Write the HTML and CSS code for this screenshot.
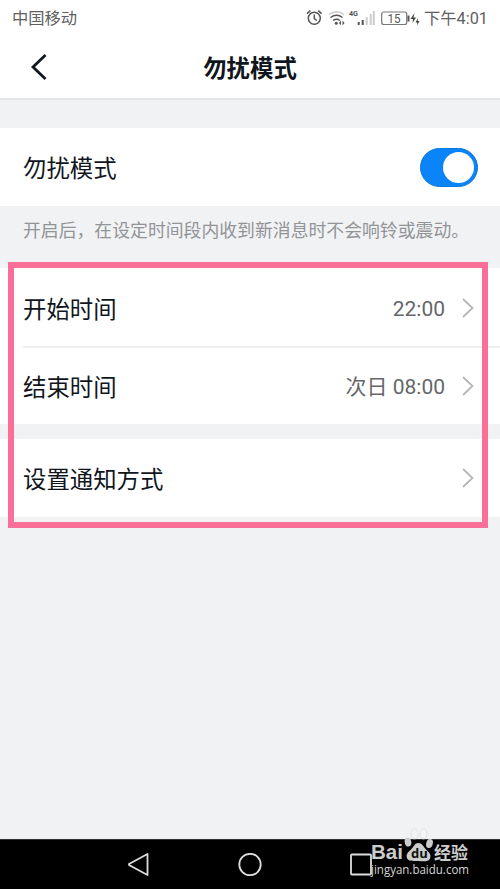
FILE: index.html
```
<!DOCTYPE html>
<html lang="zh-CN">
<head>
<meta charset="utf-8">
<title>勿扰模式</title>
<link rel="stylesheet" href="styles.css">
</head>
<body>
<div class="screen">
  <header class="top">
    <div class="status">
      <span class="carrier">中国移动</span>
      <svg class="status-icons" width="118" height="24" viewBox="0 0 118 24" fill="none" stroke="#555" stroke-width="1.5">
        <circle cx="8.3" cy="12.3" r="6"/>
        <path d="M8.3 8.5v4.2l2.6 1.8M1 7.6l3.4-3M12.2 4.6l3.4 3"/>
        <path stroke="#ccc" d="M23 8.5q7.500-5.500 15 0"/>
        <path d="M24.500 11.500q6-4.500 12 0M27 14.500q3.500-2.500 7 0"/>
        <circle cx="30.300" cy="17.300" r="1.500" fill="#555" stroke="none"/>
        <path fill="#555" stroke="none" d="M33 17l2-2.500v5zM38.500 17l-2-2.500v5z"/>
        <text class="net" x="43" y="9.500" textLength="9" lengthAdjust="spacingAndGlyphs">4G</text>
        <path stroke-width="2" d="M52.700 16v3M56.700 14v5"/>
        <path stroke="#ccc" stroke-width="2" d="M60.700 11v8M64.700 8v11M67.800 5v14"/>
        <rect x="75.700" y="6" width="25" height="12.500" rx="2" stroke="#777" stroke-width="1.200"/>
        <text class="charge" x="81.500" y="16.800" textLength="13" lengthAdjust="spacingAndGlyphs">15</text>
        <path stroke-width="2" d="M102.500 9.500v6"/>
        <path fill="#444" stroke="none" d="M108.500 7l-4 6h2.500l-.5 4 3.500-5.500h-2.500zM112 12l-2.500 4.500h1.800l-.3 3 2.500-4.500h-1.800z"/>
      </svg>
      <span class="clock">下午4:01</span>
    </div>
    <div class="titlebar">
      <svg class="back" width="18" height="28" viewBox="0 0 18 28" fill="none" stroke="#111820" stroke-width="2.800"><path d="M15.500 2L3 14 15.500 26"/></svg>
      <h1>勿扰模式</h1>
    </div>
  </header>
  <main>
    <section class="row toggle-row"><span class="label">勿扰模式</span><span class="switch"><i class="knob"></i></span></section>
    <p class="note">开启后，在设定时间段内收到新消息时不会响铃或震动。</p>
    <section class="group">
      <div class="row start-row"><span class="label">开始时间</span><span class="value">22:00</span><svg class="chevron" width="12" height="20" viewBox="0 0 12 20"><path d="M1 1l9.500 9L1 19"/></svg></div>
      <div class="divider"></div>
      <div class="row end-row"><span class="label">结束时间</span><span class="value">次日 08:00</span><svg class="chevron" width="12" height="20" viewBox="0 0 12 20"><path d="M1 1l9.500 9L1 19"/></svg></div>
    </section>
    <section class="row notify-row"><span class="label">设置通知方式</span><svg class="chevron" width="12" height="20" viewBox="0 0 12 20"><path d="M1 1l9.500 9L1 19"/></svg></section>
  </main>
  <nav class="navbar">
    <svg width="24" height="24" viewBox="0 0 24 24"><path d="M20.500 1v21L2 12v-1z"/></svg>
    <svg width="24" height="24" viewBox="0 0 24 24"><circle cx="12" cy="11.500" r="10.700"/></svg>
    <svg width="24" height="24" viewBox="0 0 24 24"><rect x="2" y="1.500" width="20" height="20" rx="1"/></svg>
  </nav>
  <div class="highlight"></div>
  <svg class="watermark" width="110" height="60" viewBox="0 0 110 60">
    <text class="brand" x="0" y="31" textLength="32" lengthAdjust="spacingAndGlyphs">Bai</text>
    <g fill="#ccc">
      <ellipse cx="37" cy="14" rx="3.300" ry="4.600" transform="rotate(-12 37 14)"/>
      <ellipse class="toe" cx="43.500" cy="6" rx="3.500" ry="5"/>
      <ellipse class="toe" cx="52.500" cy="6" rx="3.500" ry="5"/>
      <ellipse cx="58.500" cy="15.500" rx="3.300" ry="4.600" transform="rotate(15 58.500 15.500)"/>
      <path d="M47.500 15c4 0 5 4 8 7 3 2.500 5 5 3.500 8.500C57.500 34 52.500 33.500 47.500 33s-10 1-11.500-3c-1.300-3.500 1-6 4-8.500C43 18.500 43.500 15 47.500 15z"/>
    </g>
    <text class="paw-text" x="40" y="30">du</text>
    <text class="brand-cn" x="63" y="31">经验</text>
    <text class="site" x="0" y="45.500" textLength="98" lengthAdjust="spacingAndGlyphs">jingyan.baidu.com</text>
  </svg>
</div>
</body>
</html>
```
FILE: styles.css
```
* { box-sizing: border-box; }
body, h1, p { margin: 0; }
body { font-family: Roboto, "Noto Sans CJK SC", sans-serif; color: #11161d; }
svg { display: block; flex: none; }
.screen { position: relative; width: 500px; height: 889px; overflow: hidden; display: flex; flex-direction: column; background: #f1f2f4; }
.top { height: 100px; background: #fff; border-bottom: 2px solid #e5e6e8; }
.status { height: 36px; display: flex; align-items: center; padding: 1px 12px 0; color: #606060; font-size: 16.3px; line-height: 24px; }
.status-icons { margin: 0 0 2px auto; }
.clock { font-size: 16.3px; }
.net { font: bold 8px Roboto, sans-serif; fill: #555; stroke: none; }
.charge { font: 12.5px Roboto, sans-serif; fill: #555; stroke: none; }
.titlebar { height: 62px; display: grid; grid-template-columns: 60px 1fr 60px; align-items: center; }
.back { margin-left: 30px; }
h1 { padding-top: 4px; font-size: 23.4px; font-weight: 700; line-height: 34px; text-align: center; }
main { flex: 1; padding-top: 28px; }
.row { height: 78px; display: flex; align-items: center; padding: 0 26px 0 23px; background: #fff; font-size: 23.4px; line-height: 34px; }
.label { padding-top: 3px; }
.toggle-row { justify-content: space-between; padding-right: 22px; }
.switch { width: 58px; height: 39px; padding: 3px; border: 1px solid #0879dc; border-radius: 20px; background: #0a84f8; display: flex; justify-content: flex-end; }
.knob { width: 31px; height: 31px; border-radius: 50%; background: #fff; }
.note { height: 62px; padding: 12px 22px 0 23px; font-size: 17.85px; line-height: 26px; color: #929497; white-space: nowrap; }
.group { background: #fff; }
.start-row { padding-top: 2px; }
.divider { height: 2px; margin-left: 23px; background: #eeeff0; }
.end-row { height: 76px; }
.value { margin-left: auto; padding-top: 2px; color: #65676a; font-size: 21px; }
.chevron { margin-left: 17px; fill: none; stroke: #b5b6b8; stroke-width: 1.8; }
.notify-row { margin-top: 15px; }
.notify-row .chevron { margin-left: auto; }
.navbar { height: 50px; display: flex; justify-content: center; align-items: center; gap: 87px; background: #000; border-top: 1px solid #333; }
.navbar path, .navbar circle, .navbar rect { fill: none; stroke: #ddd; stroke-width: 1.8; stroke-linejoin: round; }
.highlight { position: absolute; left: 8px; top: 262px; width: 480px; height: 266px; border: 6px solid #f96f98; }
.watermark { position: absolute; left: 371px; top: 828px; overflow: visible; }
.brand { font: bold 21px "Liberation Sans", sans-serif; fill: #ccc; }
.brand-cn { font: bold 17px "Noto Sans CJK SC", sans-serif; fill: #ccc; }
.paw-text { font: bold 13px "Open Sans", sans-serif; fill: #111; }
.site { font: 12.5px "Open Sans", sans-serif; fill: #d5d5d5; }
.toe { fill: #f4f4f4; stroke: #d8d8d8; stroke-width: 0.7; }
```
